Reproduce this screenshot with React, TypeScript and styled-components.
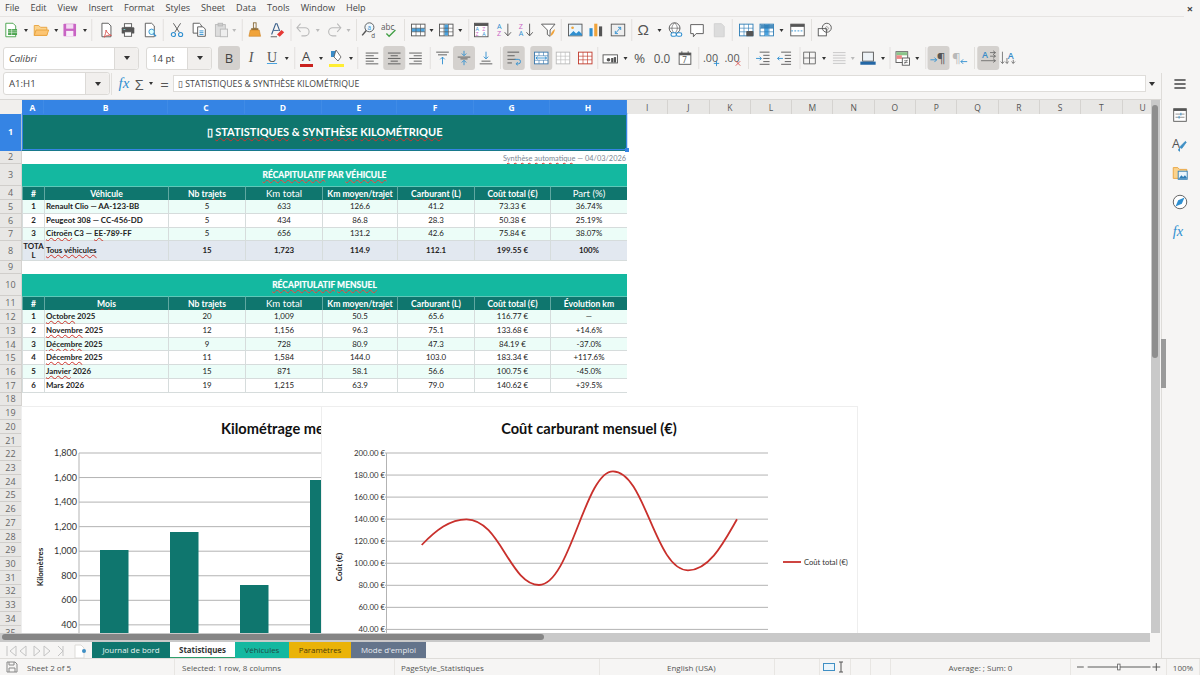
// App.tsx - spreadsheet window (Statistiques sheet)
import React from 'react';
import styled, { createGlobalStyle } from 'styled-components';

const GlobalStyle = createGlobalStyle`
  html, body { margin: 0; padding: 0; background: #f6f5f4; }
  body { font-family: "Open Sans", "Noto Sans", sans-serif; overflow: hidden; }
`;

/* ---------- window frame ---------- */
const Window = styled.div`
  width: 1200px;
  height: 675px;
  display: flex;
  flex-direction: column;
  overflow: hidden;
  background: #f6f5f4;
  color: #3a3a3a;
`;

const MenuBar = styled.div`
  height: 17px;
  flex: none;
  box-sizing: border-box;
  display: flex;
  align-items: center;
  padding: 0 11px 1px 5px;
  gap: 11px;
  font-size: 9.1px;
  color: #444;
  border-bottom: 1px solid #e6e4e2;
  margin-right: 16px;
`;

const CloseMark = styled.span`
  position: absolute;
  right: 7px;
  top: 1px;
  font-size: 11px;
  font-weight: 700;
  color: #444;
`;

const Toolbar = styled.div<{ $h: number }>`
  height: ${p => p.$h}px;
  flex: none;
  display: flex;
  align-items: center;
`;

const Slot = styled.div<{ $w: number }>`
  width: ${p => p.$w}px;
  flex: none;
  height: 24px;
  display: flex;
  align-items: center;
  justify-content: center;
  position: relative;
`;

const ActiveBox = styled.div`
  flex: none;
  width: 22px;
  height: 24px;
  border-radius: 3px;
  background: #d4d1ce;
  display: flex;
  align-items: center;
  justify-content: center;
`;

const Sep = styled.div`
  width: 1px;
  height: 22px;
  background: #e2e0dd;
`;

const Arrow = styled.div<{ $off?: boolean }>`
  width: 0;
  height: 0;
  border-left: 2.5px solid transparent;
  border-right: 2.5px solid transparent;
  border-top: 3px solid ${p => (p.$off ? '#bbb' : '#333')};
`;

const Combo = styled.div<{ $w: number; $ml: number; $italic?: boolean; $btn: number }>`
  width: ${p => p.$w}px;
  height: 23px;
  margin-left: ${p => p.$ml}px;
  flex: none;
  box-sizing: border-box;
  background: #fff;
  border: 1px solid #dcdad7;
  border-radius: 3px;
  display: flex;
  align-items: center;
  font-size: 9.6px;
  font-style: ${p => (p.$italic ? 'italic' : 'normal')};
  color: #444;
  padding-left: 5px;

  & > span { flex: 1; }
  & > div {
    width: ${p => p.$btn}px;
    height: 100%;
    background: #f1efed;
    border-left: 1px solid #dcdad7;
    border-radius: 0 3px 3px 0;
    display: flex;
    align-items: center;
    justify-content: center;
  }
`;

const ComboArrow = styled(Arrow)`
  border-left-width: 3.5px;
  border-right-width: 3.5px;
  border-top-width: 4px;
`;

/* ---------- middle: formula bar, sheet, sidebar ---------- */
const Middle = styled.div`
  flex: 1;
  min-height: 0;
  display: flex;
`;

const LeftPane = styled.div`
  width: 1161px;
  flex: none;
  display: flex;
  flex-direction: column;
  border-right: 1px solid #dedcd9;
`;

const FormulaBar = styled.div`
  height: 27px;
  flex: none;
  display: flex;
  align-items: center;
  padding-bottom: 5px;
  border-bottom: 1px solid #d9d7d4;
  box-sizing: border-box;
`;

const FormulaInput = styled.div`
  width: 973px;
  height: 17px;
  flex: none;
  box-sizing: border-box;
  background: #fff;
  border: 1px solid #dfddda;
  margin-left: 2px;
  display: flex;
  align-items: center;
  padding-left: 4px;
  font-size: 8.7px;
  color: #444;
  white-space: nowrap;
`;

const FormulaGlyph = styled.span<{ $w: number; $c?: string; $size?: number; $serif?: boolean }>`
  width: ${p => p.$w}px;
  flex: none;
  text-align: center;
  color: ${p => p.$c || '#555'};
  font-size: ${p => p.$size || 13}px;
  font-family: ${p => (p.$serif ? '"Liberation Serif", serif' : 'inherit')};
  font-style: ${p => (p.$serif ? 'italic' : 'normal')};
`;

const SheetRow = styled.div`
  flex: 1;
  min-height: 0;
  display: flex;
`;

const SheetClip = styled.div`
  width: 1151px;
  flex: none;
  position: relative;
  overflow: hidden;
  background: #fff;
`;

const SheetGrid = styled.div`
  display: grid;
  grid-template-columns: 22px 22px 124px 77px 77px 75px 77px 76px 77px repeat(13, 41.3px);
  grid-template-rows: 14px 36.5px 13.5px 22px 14.2px 13.7px 13.7px 13.7px 19.5px 13.3px 22px 14.2px repeat(25, 13.73px);
  font-family: Lato, "Open Sans", sans-serif;
`;

const Corner = styled.div`
  background: #f1efed;
`;

const ColHead = styled.div<{ $on?: boolean }>`
  display: flex;
  align-items: center;
  justify-content: center;
  font-size: 8.5px;
  box-sizing: border-box;
  font-family: "Open Sans", sans-serif;
  font-weight: ${p => (p.$on ? 700 : 400)};
  color: ${p => (p.$on ? '#fff' : '#555')};
  background: ${p => (p.$on ? '#3584e4' : '#e8e7e5')};
  border-right: 1px solid ${p => (p.$on ? '#3f8be6' : '#d5d3d0')};
`;

const RowHead = styled.div<{ $on?: boolean }>`
  grid-column: 1;
  display: flex;
  align-items: center;
  justify-content: center;
  box-sizing: border-box;
  font-size: 9px;
  font-family: "Open Sans", sans-serif;
  font-weight: ${p => (p.$on ? 700 : 400)};
  color: ${p => (p.$on ? '#fff' : '#666')};
  background: ${p => (p.$on ? '#3584e4' : '#e8e7e5')};
  border-bottom: 1px solid ${p => (p.$on ? '#3584e4' : '#d0cecb')};
  border-right: 1px solid #d5d3d0;
`;

const TitleCell = styled.div`
  grid-column: 2 / span 8;
  background: #0f766e;
  color: #fff;
  font-size: 11px;
  font-weight: 700;
  display: flex;
  align-items: center;
  justify-content: center;
  padding-bottom: 2px;
  box-sizing: border-box;
  border-top: 1px solid #fff;
`;

const NoteCell = styled.div`
  grid-column: 2 / span 8;
  color: #7b8794;
  font-size: 7.4px;
  text-align: right;
  line-height: 15px;
  padding-right: 1px;
  background: #fff;
`;

const BandCell = styled.div`
  grid-column: 2 / span 8;
  background: #14b8a0;
  color: #fff;
  font-size: 8.5px;
  font-weight: 700;
  display: flex;
  align-items: center;
  justify-content: center;
  text-shadow: 0 0 1px rgba(255, 255, 255, 0.5);
`;

const HeadCell = styled.div<{ $size?: number }>`
  background: #0f766e;
  color: #fff;
  font-size: ${p => p.$size || 8.6}px;
  font-weight: ${p => (p.$size ? 400 : 700)};
  display: flex;
  align-items: center;
  justify-content: center;
  box-sizing: border-box;
  border-left: 1px solid #5fa8a1;
  border-top: 1px solid #5fc8b8;
  white-space: nowrap;
`;

const Cell = styled.div<{ $bg: string; $bold?: boolean; $left?: boolean }>`
  background: ${p => p.$bg};
  color: #222;
  font-size: 7.9px;
  font-weight: ${p => (p.$bold ? 700 : 400)};
  display: flex;
  align-items: center;
  justify-content: ${p => (p.$left ? 'flex-start' : 'center')};
  text-align: center;
  line-height: 9px;
  padding-left: ${p => (p.$left ? 1 : 0)}px;
  box-sizing: border-box;
  border-left: 1px solid #d6dcdc;
  border-bottom: 1px solid #d6dcdc;
  white-space: nowrap;
`;

const WrapCell = styled(Cell)`
  white-space: normal;
  word-break: break-all;
`;

const Sp = styled.span`
  text-decoration: underline wavy #d0342c;
  text-decoration-thickness: 0.7px;
  text-underline-offset: 1px;
  text-decoration-skip-ink: none;
`;

const RowFill = styled.div`
  grid-column: 2 / span 8;
  background: #fff;
`;

const Selection = styled.div`
  position: absolute;
  left: 22px;
  top: 14px;
  width: 605px;
  height: 36px;
  border: 1px solid #3584e4;
  box-sizing: border-box;
  outline: 1px solid rgba(53, 132, 228, 0.25);

  &::after {
    content: '';
    position: absolute;
    right: -3px;
    bottom: -3px;
    width: 4px;
    height: 4px;
    background: #3584e4;
  }
`;

const ChartFrame = styled.div<{ $x: number; $w: number }>`
  position: absolute;
  left: ${p => p.$x}px;
  top: 307px;
  width: ${p => p.$w}px;
  height: 240px;
  background: #fff;
  box-shadow: 0 0 0 1px #eeeeee;
`;

const VScroll = styled.div`
  width: 9px;
  flex: none;
  background: #c9c9c9;
  position: relative;
`;

const VThumb = styled.div`
  position: absolute;
  left: 1px;
  top: 5px;
  width: 6px;
  height: 253px;
  border-radius: 3px;
  background: #8e8e8e;
`;

const HScroll = styled.div`
  height: 9px;
  flex: none;
  width: 1150px;
  background: #c9c9c9;
  position: relative;
`;

const HThumb = styled.div`
  position: absolute;
  left: 2px;
  top: 1px;
  height: 6px;
  width: 542px;
  border-radius: 3px;
  background: #858585;
`;

const TabBar = styled.div`
  height: 16px;
  flex: none;
  display: flex;
  align-items: center;
`;

const TabNav = styled.div`
  width: 92px;
  flex: none;
  height: 16px;
`;

const Tab = styled.div<{ $bg: string; $fg: string; $w: number; $on?: boolean }>`
  width: ${p => p.$w}px;
  height: 16px;
  box-sizing: border-box;
  flex: none;
  background: ${p => p.$bg};
  color: ${p => p.$fg};
  font-size: 7.9px;
  font-weight: ${p => (p.$on ? 700 : 400)};
  display: flex;
  align-items: center;
  justify-content: center;
  border-bottom: ${p => (p.$on ? '1px solid #2e9e6b' : 'none')};
`;

const Sidebar = styled.div`
  flex: 1;
  display: flex;
  flex-direction: column;
  align-items: center;
  gap: 9px;
  padding: 1px 2px 0 0;
  position: relative;
`;

const SideItem = styled.div<{ $mb?: number }>`
  height: 20px;
  display: flex;
  align-items: center;
  justify-content: center;
  margin-bottom: ${p => p.$mb || 0}px;
`;

const SideHandle = styled.div`
  position: absolute;
  left: -1px;
  top: 266px;
  width: 5px;
  height: 49px;
  background: #9a9a9a;
`;

const StatusBar = styled.div`
  height: 17px;
  flex: none;
  display: flex;
  align-items: center;
  font-size: 8px;
  color: #555;
  border-top: 1px solid #dedcd9;
  box-sizing: border-box;
`;

const StatusCell = styled.div<{ $w: number; $center?: boolean; $pad?: number }>`
  width: ${p => p.$w}px;
  height: 100%;
  flex: none;
  box-sizing: border-box;
  display: flex;
  align-items: center;
  gap: 3px;
  justify-content: ${p => (p.$center ? 'center' : 'flex-start')};
  padding-left: ${p => p.$pad || 0}px;
  border-right: 1px solid #e8e6e3;
  white-space: nowrap;
`;

/* ---------- icons ---------- */
const B = '#2f8fd0';
const G = '#555';
const LG = '#b9b9b9';

const Lines = ({ ys, x1, x2, c = G }: { ys: number[]; x1: number[]; x2: number[]; c?: string }) => (
  <>
    {ys.map((y, i) => (
      <line key={y} x1={x1[i % x1.length]} x2={x2[i % x2.length]} y1={y} y2={y} stroke={c} />
    ))}
  </>
);

const TableGlyph = ({ fill, kind, stroke = G }: { fill: string; kind: 'row' | 'col' | 'none'; stroke?: string }) => (
  <>
    <rect x="2.5" y="3.5" width="15" height="13" fill="#fff" stroke={stroke} />
    {kind === 'row' && <rect x="3" y="8" width="14" height="4" fill={fill} />}
    {kind === 'col' && <rect x="8" y="4" width="4" height="12" fill={fill} />}
    <path d="M2.5 8h15M2.5 12h15M7.5 3.5v13M12.5 3.5v13" stroke={stroke} strokeWidth=".7" fill="none" />
  </>
);

const icons: Record<string, React.ReactNode> = {
  new: (<><path d="M4.5 2.5h8l3 3v12h-11z" fill="#fff" stroke="#43a047" /><rect x="7" y="9" width="10" height="6.5" fill="#43a047" /><path d="M7 11h10M7 13h10M11 9v6.5" stroke="#fff" strokeWidth=".6" /></>),
  open: (<><path d="M2.5 16V5h5l2 2h7v9z" fill="#fbd38d" stroke="#e8a33d" /><path d="M2.5 16l2-6h14l-2 6z" fill="#fcc573" stroke="#e8a33d" /></>),
  save: (<><rect x="3" y="3" width="14" height="14" rx="1" fill="#c964c4" /><rect x="6" y="3.5" width="8" height="5" fill="#f4dcf3" /><rect x="6" y="11" width="8" height="6" fill="#f9eef9" /></>),
  pdf: (<><path d="M5.5 2.5h7l3 3v12h-10z" fill="#fff" stroke={G} /><path d="M10 10c1 3 3 5 6 6-3-.5-6 0-8 2 1-3 2-5 2-8z" fill="none" stroke="#d9534f" /></>),
  print: (<><rect x="6" y="3" width="8" height="4" fill="#fff" stroke={G} /><rect x="3" y="7" width="14" height="7" rx="1" fill="#555" /><rect x="6" y="12" width="8" height="5" fill="#fff" stroke={G} /><rect x="5" y="9" width="2" height="1" fill="#7cc" /></>),
  preview: (<><path d="M4.5 2.5h7l3 3v12h-10z" fill="#fff" stroke={G} /><circle cx="11.5" cy="12" r="3" fill="#dff" stroke={B} /><path d="M13.5 14l3 3" stroke={B} strokeWidth="1.4" /></>),
  cut: (<><path d="M6 2.5l6.5 10M14 2.5L7.5 12.5" stroke={G} fill="none" /><circle cx="6" cy="15" r="2.3" fill="none" stroke={B} strokeWidth="1.2" /><circle cx="14" cy="15" r="2.3" fill="none" stroke={B} strokeWidth="1.2" /></>),
  copy: (<><path d="M3.5 2.5h7l2 2v9h-9z" fill="#fff" stroke={G} /><path d="M8.5 6.5h6l2.5 2.5v8h-8.5z" fill="#fff" stroke={G} /><path d="M10.5 11h4.5M10.5 13h4.5M10.5 15h4.5" stroke={B} /></>),
  paste: (<><rect x="3.5" y="4" width="11" height="13" fill="#ddd" stroke={LG} /><rect x="6.5" y="2.5" width="5" height="3" fill="#ccc" stroke={LG} /><rect x="9" y="9" width="8" height="8.5" fill="#eee" stroke={LG} /></>),
  clone: (<><rect x="8.5" y="2" width="3" height="6" fill="none" stroke="#8a6d3b" /><rect x="6" y="8" width="8" height="2" fill="#8a6d3b" /><path d="M5 10h10l1.5 7h-13z" fill="#f0a33a" stroke="#c77d1e" strokeWidth=".6" /></>),
  clear: (<><path d="M4 15L8.5 3h1.5l3 8" fill="none" stroke="#3a5f8a" strokeWidth="1.2" /><path d="M6 10.5h6" stroke="#3a5f8a" /><path d="M10 15l5-5 3 2.5-5 5z" fill="#e53935" /><path d="M3 17.5h7" stroke={G} /></>),
  undo: (<path d="M7 3L3 7.5 7 12M3.5 7.5H12a4.5 4.5 0 010 9H8" fill="none" stroke={LG} strokeWidth="1.2" />),
  redo: (<path d="M13 3l4 4.5L13 12M16.5 7.5H8a4.5 4.5 0 000 9h4" fill="none" stroke={LG} strokeWidth="1.2" />),
  find: (<><circle cx="11" cy="7" r="5" fill="#eef7fd" stroke={G} /><path d="M7.5 10.5L3 16" stroke={G} strokeWidth="1.6" /><text x="9" y="9.5" fontSize="7" fill={B} fontFamily="Open Sans">a</text><text x="13" y="18.5" fontSize="7" fill={G} fontFamily="Open Sans">d</text></>),
  spell: (<><text x="0" y="10" fontSize="9" fill={G} fontFamily="Open Sans">abc</text><path d="M6 14l3 3 7-7" fill="none" stroke="#43a047" strokeWidth="1.5" /></>),
  rows: <TableGlyph fill="#4aa3df" kind="row" />,
  cols: <TableGlyph fill="#4aa3df" kind="col" />,
  sort: (<><rect x="2.5" y="2.5" width="15" height="15" fill="#fff" stroke={G} /><rect x="2.5" y="2.5" width="15" height="3" fill={G} /><text x="3.5" y="11" fontSize="6" fill={B} fontFamily="Open Sans">A</text><text x="3.5" y="17" fontSize="6" fill="#c964c4" fontFamily="Open Sans">Z</text><text x="11" y="11" fontSize="6" fill="#c964c4" fontFamily="Open Sans">Z</text><text x="11" y="17" fontSize="6" fill={B} fontFamily="Open Sans">A</text></>),
  asc: (<><text x="2" y="9" fontSize="8" fill={B} fontFamily="Open Sans">A</text><text x="2" y="17" fontSize="8" fill="#c964c4" fontFamily="Open Sans">Z</text><path d="M14 3v13M10.5 12.5L14 16.5l3.5-4" fill="none" stroke={G} /></>),
  desc: (<><text x="2" y="9" fontSize="8" fill="#c964c4" fontFamily="Open Sans">Z</text><text x="2" y="17" fontSize="8" fill={B} fontFamily="Open Sans">A</text><path d="M14 3v13M10.5 12.5L14 16.5l3.5-4" fill="none" stroke={G} /></>),
  filter: (<><path d="M2.5 3.5h15L12 10v7l-3-2v-5z" fill="#fff" stroke={G} /><path d="M12.5 17c0-3 2-6 5-8-.5 3-1.5 6-5 8z" fill="#f0a33a" /></>),
  image: (<><rect x="2.5" y="3.5" width="15" height="13" fill="#eaf5fc" stroke={G} /><circle cx="7" cy="7.5" r="1.5" fill="#f0a33a" /><path d="M3 16l5-5 3 3 3-3 3.5 3.5V16z" fill={B} /></>),
  chart: (<><rect x="3" y="8" width="3.5" height="9" fill={B} /><rect x="8.3" y="3" width="3.5" height="14" fill="#f0a33a" /><rect x="13.6" y="6" width="3.5" height="11" fill={G} /></>),
  pivot: (<><rect x="2.5" y="3.5" width="15" height="13" fill="#eee" stroke={G} /><path d="M7 14l6-7M13 7h-3M13 7v3M7 14h3M7 14v-3" stroke={B} fill="none" /></>),
  omega: (<text x="2" y="16" fontSize="17" fill={G} fontFamily="Liberation Sans">Ω</text>),
  link: (<><circle cx="9" cy="8" r="6" fill="#fff" stroke={G} /><path d="M3 8h12M9 2c-4 4-4 8 0 12M9 2c4 4 4 8 0 12" fill="none" stroke={G} strokeWidth=".7" /><rect x="5" y="13" width="6" height="4" rx="2" fill="#fff" stroke={B} strokeWidth="1.2" /><rect x="11" y="13" width="6" height="4" rx="2" fill="#fff" stroke={B} strokeWidth="1.2" /></>),
  comment: (<path d="M3 4h14v10H9l-3 3.5V14H3z" fill="#fff" stroke={G} />),
  note: (<path d="M4.5 3h8l3 3v11.5h-11z" fill="#dcdcdc" stroke="#d0d0d0" />),
  headers: (<><TableGlyph fill="#4aa3df" kind="none" stroke="#2e7db5" /><rect x="10" y="11" width="8" height="6" rx="1" fill={G} /></>),
  freeze: (<><TableGlyph fill="#4aa3df" kind="col" stroke="#2e7db5" /><rect x="3" y="4" width="14" height="4" fill="#2e7db5" opacity=".85" /></>),
  split: (<><rect x="2.5" y="3.5" width="15" height="13" fill="#fff" stroke={G} /><rect x="2.5" y="3.5" width="15" height="3" fill={G} /><path d="M3 11h14" stroke={B} strokeDasharray="2 1.5" /></>),
  shapes: (<><rect x="2.5" y="8.5" width="9" height="8" fill="#fff" stroke={G} /><circle cx="12" cy="7.5" r="5" fill="none" stroke={G} /><path d="M10 8l2-2 2 2-2 3z" fill="none" stroke={G} strokeWidth=".6" /></>),
  alignL: <Lines ys={[4.5, 7.5, 10.5, 13.5, 16.5]} x1={[3]} x2={[17, 12, 17, 12, 17]} />,
  alignC: <Lines ys={[4.5, 7.5, 10.5, 13.5, 16.5]} x1={[3, 6]} x2={[17, 14]} />,
  alignR: <Lines ys={[4.5, 7.5, 10.5, 13.5, 16.5]} x1={[3, 8]} x2={[17]} />,
  top: (<><Lines ys={[3.5, 6.5]} x1={[3, 5]} x2={[17, 15]} /><path d="M10 17V9M7.5 11.5L10 9l2.5 2.5" fill="none" stroke={B} /></>),
  middle: (<><Lines ys={[9, 11]} x1={[3, 6]} x2={[17, 14]} /><path d="M10 2v5M7.5 5L10 7.5 12.5 5M10 18v-5M7.5 15L10 12.5l2.5 2.5" fill="none" stroke={B} /></>),
  bottom: (<><Lines ys={[13.5, 16.5]} x1={[5, 3]} x2={[15, 17]} /><path d="M10 3v8M7.5 8.5L10 11l2.5-2.5" fill="none" stroke={B} /></>),
  wrap: (<><Lines ys={[3.5, 7.5, 11.5, 15.5]} x1={[3]} x2={[16, 11, 12, 8]} /><path d="M11 11.5h4a2 2 0 010 5h-2M14.5 14.5L12.5 16.5l2 1.5" fill="none" stroke={B} /></>),
  merge: (<><rect x="2.5" y="3.5" width="15" height="13" fill="#fff" stroke="#3a78ad" /><path d="M2.5 7.5h15M2.5 12.5h15M7.5 3.5v4M12.5 3.5v4M7.5 12.5v4M12.5 12.5v4" stroke="#3a78ad" strokeWidth=".7" /><path d="M4 10h12M6 8.5L4 10l2 1.5M14 8.5l2 1.5-2 1.5" stroke={B} fill="none" /></>),
  unmerge: <TableGlyph fill="#ccc" kind="none" stroke={LG} />,
  splitcell: <TableGlyph fill="#ccc" kind="none" stroke="#c0392b" />,
  currency: (<><rect x="2" y="6.5" width="16" height="9" fill="#fff" stroke={G} /><circle cx="8" cy="12" r="2" fill={G} /><rect x="11" y="10" width="2.5" height="5" fill={G} /><rect x="14" y="9" width="2.5" height="6" fill={G} /></>),
  percent: (<text x="1" y="16" fontSize="15" fill={G} fontFamily="Open Sans">%</text>),
  number: (<text x="0" y="15" fontSize="13" fill={G} fontFamily="Open Sans">0.0</text>),
  date: (<><rect x="3.5" y="4.5" width="13" height="12.5" fill="#fff" stroke={G} /><rect x="3.5" y="4.5" width="13" height="2.5" fill={G} /><path d="M6.5 2.5v3M13.5 2.5v3" stroke={G} /><text x="7" y="15.5" fontSize="9" fill={G} fontFamily="Open Sans">7</text></>),
  decAdd: (<><text x="0" y="14" fontSize="12" fill={G} fontFamily="Open Sans">.00</text><path d="M15 13v6M12 16h6" stroke={B} /></>),
  decDel: (<><text x="0" y="14" fontSize="12" fill={G} fontFamily="Open Sans">.00</text><path d="M12.5 13.5l5 5M17.5 13.5l-5 5" stroke="#d9534f" /></>),
  indent: (<><Lines ys={[3.5, 7, 10.5, 14, 17]} x1={[6, 10, 10, 10, 6]} x2={[17]} /><path d="M2 10.5h6M6 8.5l2 2-2 2" fill="none" stroke={B} /></>),
  outdent: (<><Lines ys={[3.5, 7, 10.5, 14, 17]} x1={[6, 10, 10, 10, 6]} x2={[17]} /><path d="M8 10.5H2M4 8.5l-2 2 2 2" fill="none" stroke={B} /></>),
  border: (<path d="M3.5 3.5h13v13h-13zM3.5 10h13M10 3.5v13" fill="none" stroke="#666" />),
  lineStyle: <Lines ys={[4, 7, 10, 13, 16]} x1={[3]} x2={[17]} c="#c4c4c4" />,
  borderColor: (<><rect x="4" y="3.5" width="12" height="10" fill="#eef3f7" stroke={G} /><rect x="1.5" y="14" width="17" height="3.5" fill="#2467a5" /></>),
  cond: (<><rect x="2.5" y="3" width="13" height="12" fill="#fff" stroke={G} /><rect x="3" y="3.5" width="12" height="3.5" fill="#8bc48a" /><rect x="3" y="7" width="6" height="4" fill="#e88" /><rect x="9.5" y="10" width="8" height="8" fill="#fff" stroke={G} /><path d="M11.5 13h4M11.5 15h4M15 12l-3 4.5" stroke={G} strokeWidth=".7" /></>),
  ltr: (<><text x="8" y="15" fontSize="15" fill={G} fontFamily="Open Sans">¶</text><path d="M1 12h7M5.5 9.5L8 12l-2.5 2.5" fill="none" stroke={B} /></>),
  rtl: (<><text x="1" y="15" fontSize="15" fill={LG} fontFamily="Open Sans">¶</text><path d="M18 14h-7M13.5 11.5L11 14l2.5 2.5" fill="none" stroke={B} /></>),
  textH: (<><text x="3" y="10" fontSize="10" fill="#3a8cc8" fontWeight="600" fontFamily="Open Sans">A</text><path d="M12 4h6M12 8h6M2 13h16M15.5 2l2.5 2-2.5 2M15.5 6l2.5 2-2.5 2M15.5 11l2.5 2-2.5 2" fill="none" stroke={G} strokeWidth=".8" /></>),
  textV: (<><text x="9" y="11" fontSize="10" fill="#3a8cc8" fontWeight="600" fontFamily="Open Sans">A</text><path d="M3 3v13M8 10v6M15 12v4M1 14l2 2 2-2M6 14l2 2 2-2M13 14l2 2 2-2" fill="none" stroke={G} strokeWidth=".8" /></>),
  hamburger: (<path d="M3 5h14M3 10h14M3 15h14" stroke="#444" strokeWidth="1.6" />),
  props: (<><rect x="3" y="3" width="14" height="14" fill="#fff" stroke={G} /><rect x="3" y="3" width="14" height="2.5" fill={G} /><path d="M5 9h10M5 12.5h10" stroke={G} strokeWidth=".7" /><path d="M11 7.5v3M9 11v3" stroke={B} /></>),
  styleA: (<><text x="1" y="14" fontSize="14" fill={G} fontFamily="Open Sans">A</text><path d="M10 18c-2 0-2-2-1-3s2-1 3 0l5-7-1-1-6 6" fill="#3f8fc4" stroke="#3f8fc4" strokeWidth=".8" /></>),
  gallery: (<><path d="M2.5 16V4h5l2 2h8v10z" fill="#fbd38d" stroke="#e8a33d" /><rect x="8" y="8" width="10" height="9" fill="#eaf5fc" stroke="#2e7db5" /><path d="M8.5 16.5l3-4 2 2 2-2 2 2.5v1.5z" fill="#2e7db5" /></>),
  navigator: (<><circle cx="10" cy="10" r="7.5" fill="#fff" stroke={G} /><path d="M15 5l-3 7-7 3 3-7z" fill="#2f8fd0" /></>),
  functions: (<text x="2" y="16" fontSize="16" fontStyle="italic" fill="#2f8fd0" fontFamily="Liberation Serif">fx</text>),
};

const Ico = ({ name, size = 20 }: { name: string; size?: number }) => (
  <svg width={size} height={size} viewBox="0 0 20 20" style={{ flex: 'none' }}>{icons[name]}</svg>
);

type ToolItem = [string, number];

const FmtLetter = styled.span<{ $kind: string }>`
  font-family: "Liberation Serif", serif;
  font-size: 14px;
  color: #555;
  font-style: ${p => (p.$kind === 'italic' ? 'italic' : 'normal')};
  text-decoration: ${p => (p.$kind === 'under' ? 'underline #4aa3df' : 'none')};
`;

const BoldBox = styled(ActiveBox)`
  font-family: "Open Sans", sans-serif;
  font-size: 13px;
  color: #444;
`;

const ColorA = styled.div<{ $bar: string }>`
  width: 18px;
  height: 18px;
  display: flex;
  justify-content: center;
  font-size: 13px;
  line-height: 14px;
  color: #444;
  border-bottom: 3px solid ${p => p.$bar};
  box-sizing: border-box;
`;

const TextTool = ({ name }: { name: string }) => {
  if (name === 'B') return <BoldBox>B</BoldBox>;
  if (name === 'I') return <FmtLetter $kind="italic">I</FmtLetter>;
  if (name === 'U') return <FmtLetter $kind="under">U</FmtLetter>;
  if (name === 'fontColor') return <ColorA $bar="#c9211e">A</ColorA>;
  if (name === 'hl') return <ColorA $bar="#ffee33"><svg width="14" height="14" viewBox="0 0 14 14"><path d="M2 2h5v6H2z" fill="#3a8cc8" /><path d="M7 1l5 7-3 4-4-4z" fill="#fff" stroke="#555" strokeWidth=".8" /></svg></ColorA>;
  return null;
};

const ToolSlots = ({ items, start, active = [] }: { items: ToolItem[]; start: number; active?: string[] }) => {
  let left = start;
  return (
    <>
      {items.map(([name, c], i) => {
        const next = items[i + 1];
        const right = next ? (c + next[1]) / 2 : c + 11;
        const w = right - left;
        // keep the item centred on c even when the slot edges are uneven
        const shift = c - (left + right) / 2;
        left = right;
        let inner: React.ReactNode;
        if (name === 'sep') inner = <Sep />;
        else if (name === 'arr') inner = <Arrow />;
        else if (name === 'arrOff') inner = <Arrow $off />;
        else if (active.includes(name)) inner = <ActiveBox><Ico name={name} size={18} /></ActiveBox>;
        else if (name in icons) inner = <Ico name={name} size={18} />;
        else inner = <TextTool name={name} />;
        return <Slot key={`${name}${c}`} $w={w} style={{ transform: `translateX(${shift}px)` }}>{inner}</Slot>;
      })}
    </>
  );
};

const row1: ToolItem[] = [
  ['new', 12], ['arr', 27], ['open', 42], ['arr', 57], ['save', 71], ['arr', 86], ['sep', 93],
  ['pdf', 107], ['print', 129], ['preview', 151], ['sep', 164], ['cut', 178], ['copy', 200], ['paste', 222], ['arrOff', 235], ['sep', 243],
  ['clone', 256], ['clear', 278], ['sep', 292], ['undo', 304], ['arrOff', 319], ['redo', 335], ['arrOff', 349], ['sep', 357],
  ['find', 369], ['spell', 391], ['sep', 405], ['rows', 419], ['arr', 432], ['cols', 447], ['arr', 461], ['sep', 470],
  ['sort', 482], ['asc', 505], ['desc', 527], ['filter', 549], ['sep', 562], ['image', 576], ['chart', 597], ['pivot', 619], ['sep', 633],
  ['omega', 646], ['arr', 660], ['link', 676], ['comment', 698], ['note', 720], ['sep', 733], ['headers', 747], ['freeze', 768], ['arr', 782],
  ['split', 798], ['sep', 812], ['shapes', 826],
];

const row2: ToolItem[] = [
  ['B', 229], ['I', 251], ['U', 272], ['arr', 287], ['sep', 295], ['fontColor', 306], ['arr', 321], ['hl', 336], ['arr', 351], ['sep', 358],
  ['alignL', 372], ['alignC', 394], ['alignR', 415], ['sep', 430], ['top', 442], ['middle', 464], ['bottom', 486], ['sep', 500],
  ['wrap', 514], ['merge', 541], ['unmerge', 563], ['splitcell', 585], ['sep', 598], ['currency', 610], ['arr', 625], ['percent', 642],
  ['number', 663], ['date', 685], ['sep', 699], ['decAdd', 712], ['decDel', 733], ['sep', 748], ['indent', 763], ['outdent', 785], ['sep', 800],
  ['border', 809], ['arr', 824], ['lineStyle', 839], ['arrOff', 853], ['borderColor', 868], ['arr', 883], ['sep', 890],
  ['cond', 903], ['arr', 917], ['sep', 926], ['ltr', 938], ['rtl', 960], ['sep', 974], ['textH', 988], ['textV', 1009],
];

/* ---------- sheet data ---------- */
const colNames = 'ABCDEFGHIJKLMNOPQRSTU'.split('');
const mint = '#ecfdf8';
const white = '#ffffff';
const totalBg = '#e2e8f0';

const vehicles = [
  ['1', 'Renault Clio — AA-123-BB', '5', '633', '126.6', '41.2', '73.33 €', '36.74%'],
  ['2', 'Peugeot 308 — CC-456-DD', '5', '434', '86.8', '28.3', '50.38 €', '25.19%'],
  ['3', <><Sp>Citroën</Sp> C3 — <Sp>EE</Sp>-789-FF</>, '5', '656', '131.2', '42.6', '75.84 €', '38.07%'],
];

const months = [
  ['1', <><Sp>Octobre</Sp> 2025</>, '20', '1,009', '50.5', '65.6', '116.77 €', '—'],
  ['2', <><Sp>Novembre</Sp> 2025</>, '12', '1,156', '96.3', '75.1', '133.68 €', '+14.6%'],
  ['3', <><Sp>Décembre</Sp> 2025</>, '9', '728', '80.9', '47.3', '84.19 €', '-37.0%'],
  ['4', <><Sp>Décembre</Sp> 2025</>, '11', '1,584', '144.0', '103.0', '183.34 €', '+117.6%'],
  ['5', <><Sp>Janvier</Sp> 2026</>, '15', '871', '58.1', '56.6', '100.75 €', '-45.0%'],
  ['6', 'Mars 2026', '19', '1,215', '63.9', '79.0', '140.62 €', '+39.5%'],
];

const DataRow = ({ row, bg }: { row: React.ReactNode[]; bg: string }) => (
  <>
    {row.map((v, i) => (
      <Cell key={i} $bg={bg} $bold={i < 2} $left={i === 1}><span>{v}</span></Cell>
    ))}
  </>
);

const HeaderRow = ({ label, last }: { label: string; last: React.ReactNode }) => (
  <>
    <HeadCell>#</HeadCell>
    <HeadCell><Sp>{label}</Sp></HeadCell>
    <HeadCell><span>Nb <Sp>trajets</Sp></span></HeadCell>
    <HeadCell $size={9.6}>Km total</HeadCell>
    <HeadCell><span>Km <Sp>moyen/trajet</Sp></span></HeadCell>
    <HeadCell><span><Sp>Carburant</Sp> (L)</span></HeadCell>
    <HeadCell><span><Sp>Coût</Sp> total (€)</span></HeadCell>
    {last}
  </>
);

/* ---------- charts: coordinates are those of the page minus the frame origin ---------- */
const chartFont = 'Lato, sans-serif';

const KmChart = () => {
  const ticks = [1800, 1600, 1400, 1200, 1000, 800, 600, 400];
  const bars: [number, number][] = [[100, 550], [170, 532], [240, 585], [310, 480]];
  return (
    <svg width="300" height="240" viewBox="22 407 300 240" fontFamily={chartFont}>
      <text x="221" y="434" fontSize="14.6" fontWeight="700" fill="#111">Kilométrage mensuel</text>
      <line x1="79" x2="79" y1="453" y2="640" stroke="#b3b3b3" />
      {ticks.map((t, i) => {
        const y = 453 + i * 24.55;
        return (
          <g key={t}>
            <line x1="79" x2="322" y1={y} y2={y} stroke="#b3b3b3" />
            <text x="77" y={y + 3} fontSize="9" textAnchor="end" fill="#333">{t.toLocaleString('en-US')}</text>
          </g>
        );
      })}
      {bars.map(([x, top]) => (
        <rect key={x} x={x} y={top} width="28.5" height={645 - top} fill="#0f766e" />
      ))}
      <text transform="translate(43 567) rotate(-90)" fontSize="8" fontWeight="700" textAnchor="middle" fill="#222">Kilomètres</text>
    </svg>
  );
};

const CostChart = () => {
  const ticks = [200, 180, 160, 140, 120, 100, 80, 60, 40];
  return (
    <svg width="535" height="240" viewBox="322 407 535 240" fontFamily={chartFont}>
      <text x="589" y="434" fontSize="14.6" fontWeight="700" fill="#111" textAnchor="middle">Coût carburant mensuel (€)</text>
      <line x1="386.5" x2="386.5" y1="453" y2="640" stroke="#b3b3b3" />
      {ticks.map((t, i) => {
        const y = 453 + i * 22.05;
        return (
          <g key={t}>
            <line x1="385" x2="768" y1={y} y2={y} stroke="#b3b3b3" />
            <text x="385" y={y + 3} fontSize="7.8" textAnchor="end" fill="#333">{t}.00 €</text>
          </g>
        );
      })}
      <path
        d="M421.7 545C436 530 450 519.3 466.5 519.3C500 519.3 510 585 539 585C570 585 585 471.3 613 471.3C645 471.3 655 570.3 688 570.3C710 570.3 725 540 737 519.3"
        fill="none" stroke="#c9302c" strokeWidth="1.8"
      />
      <text transform="translate(342 567) rotate(-90)" fontSize="8" fontWeight="700" textAnchor="middle" fill="#222">Coût (€)</text>
      <line x1="783" x2="801" y1="562" y2="562" stroke="#c9302c" strokeWidth="1.8" />
      <text x="804" y="565" fontSize="7.6" fill="#333">Coût total (€)</text>
    </svg>
  );
};

const Sheet = () => (
  <SheetGrid>
    <Corner />
    {colNames.map((c, i) => <ColHead key={c} $on={i < 8}>{c}</ColHead>)}

    <RowHead $on>1</RowHead>
    <TitleCell><span>▯ <Sp>STATISTIQUES</Sp> &amp; <Sp>SYNTHÈSE</Sp> <Sp>KILOMÉTRIQUE</Sp></span></TitleCell>
    <div style={{ gridColumn: '10 / span 13' }} />

    <RowHead>2</RowHead>
    <NoteCell><Sp>Synthèse automatique</Sp> — 04/03/2026</NoteCell>

    <RowHead>3</RowHead>
    <BandCell><span><Sp>RÉCAPITULATIF</Sp> PAR <Sp>VÉHICULE</Sp></span></BandCell>

    <RowHead>4</RowHead>
    <HeaderRow label="Véhicule" last={<HeadCell $size={9.6}>Part (%)</HeadCell>} />

    {vehicles.map((r, i) => (
      <React.Fragment key={i}>
        <RowHead>{i + 5}</RowHead>
        <DataRow row={r} bg={i % 2 ? white : mint} />
      </React.Fragment>
    ))}

    <RowHead>8</RowHead>
    <WrapCell $bg={totalBg} $bold>TOTAL</WrapCell>
    <Cell $bg={totalBg} $bold $left><Sp>Tous véhicules</Sp></Cell>
    {['15', '1,723', '114.9', '112.1', '199.55 €', '100%'].map(v => (
      <Cell key={v} $bg={totalBg} $bold>{v}</Cell>
    ))}

    <RowHead>9</RowHead>
    <RowFill />

    <RowHead>10</RowHead>
    <BandCell><span><Sp>RÉCAPITULATIF</Sp> <Sp>MENSUEL</Sp></span></BandCell>

    <RowHead>11</RowHead>
    <HeaderRow label="Mois" last={<HeadCell><span><Sp>Évolution</Sp> km</span></HeadCell>} />

    {months.map((r, i) => (
      <React.Fragment key={i}>
        <RowHead>{i + 12}</RowHead>
        <DataRow row={r} bg={i % 2 ? white : mint} />
      </React.Fragment>
    ))}

    {Array.from({ length: 18 }, (_, i) => <RowHead key={i}>{i + 18}</RowHead>)}
  </SheetGrid>
);

const App: React.FC = () => (
  <Window>
    <GlobalStyle />
    <MenuBar>
      {['File', 'Edit', 'View', 'Insert', 'Format', 'Styles', 'Sheet', 'Data', 'Tools', 'Window', 'Help'].map(m => (
        <span key={m}>{m}</span>
      ))}
      <CloseMark>×</CloseMark>
    </MenuBar>

    <Toolbar $h={26}>
      <ToolSlots items={row1} start={1} />
    </Toolbar>

    <Toolbar $h={30}>
      <Combo $w={136} $ml={3} $btn={23} $italic><span>Calibri</span><div><ComboArrow /></div></Combo>
      <Combo $w={66} $ml={7} $btn={23}><span>14 pt</span><div><ComboArrow /></div></Combo>
      <ToolSlots items={row2} start={212} active={['alignC', 'middle', 'wrap', 'merge', 'ltr', 'textH']} />
    </Toolbar>

    <Middle>
      <LeftPane>
        <FormulaBar>
          <Combo $w={107} $ml={3} $btn={23}><span>A1:H1</span><div><ComboArrow /></div></Combo>
          <Slot $w={3}><Sep /></Slot>
          <FormulaGlyph $w={22} $c="#2f8fd0" $serif $size={15}>fx</FormulaGlyph>
          <FormulaGlyph $w={8} $size={15}>Σ</FormulaGlyph>
          <Slot $w={15}><Arrow /></Slot>
          <FormulaGlyph $w={13} $size={15}>=</FormulaGlyph>
          <FormulaInput>▯ STATISTIQUES &amp; SYNTHÈSE KILOMÉTRIQUE</FormulaInput>
          <Slot $w={12}><ComboArrow /></Slot>
        </FormulaBar>

        <SheetRow>
          <SheetClip>
            <Sheet />
            <Selection />
            <ChartFrame $x={22} $w={300}><KmChart /></ChartFrame>
            <ChartFrame $x={322} $w={535}><CostChart /></ChartFrame>
          </SheetClip>
          <VScroll><VThumb /></VScroll>
        </SheetRow>

        <HScroll><HThumb /></HScroll>

        <TabBar>
          <TabNav>
            <svg width="92" height="16" viewBox="0 0 92 16">
              <path d="M7 3v10M16 3l-6 5 6 5zM26 3l-6 5 6 5zM34 3l6 5-6 5zM44 3l6 5-6 5zM58 3l5 5-5 5M63 3v10" fill="none" stroke="#c4c4c4" />
              <path d="M75 2h6l3 3v10H75z" fill="#fff" stroke="#dddbd8" />
              <circle cx="84" cy="8" r="2" fill="#3f8fc4" />
            </svg>
          </TabNav>
          <Tab $w={78} $bg="#0f766e" $fg="#e6f3f1">Journal de bord</Tab>
          <Tab $w={65} $bg="#ffffff" $fg="#333" $on>Statistiques</Tab>
          <Tab $w={54} $bg="#14b8a0" $fg="#204a44">Véhicules</Tab>
          <Tab $w={62} $bg="#eab308" $fg="#4a3a08">Paramètres</Tab>
          <Tab $w={75} $bg="#64748b" $fg="#e8ecf1">Mode d'emploi</Tab>
        </TabBar>
      </LeftPane>

      <Sidebar>
        <SideHandle />
        <SideItem $mb={2}><Ico name="hamburger" size={16} /></SideItem>
        <SideItem><Ico name="props" size={18} /></SideItem>
        <SideItem><Ico name="styleA" size={18} /></SideItem>
        <SideItem><Ico name="gallery" size={18} /></SideItem>
        <SideItem><Ico name="navigator" size={18} /></SideItem>
        <SideItem><Ico name="functions" size={18} /></SideItem>
      </Sidebar>
    </Middle>

    <StatusBar>
      <StatusCell $w={175} $pad={6}>
        <svg width="12" height="12" viewBox="0 0 12 12" style={{ marginRight: 6 }}>
          <path d="M1 1h8l2 2v8H1z M3 1v3h5V1 M3 11V7h6v4" fill="none" stroke="#888" />
        </svg>
        Sheet 2 of 5
      </StatusCell>
      <StatusCell $w={220} $pad={7}>Selected: 1 row, 8 columns</StatusCell>
      <StatusCell $w={205} $pad={6}>PageStyle_Statistiques</StatusCell>
      <StatusCell $w={175} $pad={67}>English (USA)</StatusCell>
      <StatusCell $w={45} $pad={0}>&nbsp;</StatusCell>
      <StatusCell $w={31} $center>
        <svg width="26" height="12" viewBox="0 0 26 12">
          <rect x="1.5" y="2.5" width="11" height="7" fill="#eaf5fc" stroke="#3f8fc4" />
          <path d="M17 1h4M17 11h4M19 1v10" stroke="#555" />
        </svg>
      </StatusCell>
      <StatusCell $w={20}>&nbsp;</StatusCell>
      <StatusCell $w={20}>&nbsp;</StatusCell>
      <StatusCell $w={180} $center>Average: ; Sum: 0</StatusCell>
      <StatusCell $w={96} $pad={6}>
        <svg width="92" height="12" viewBox="0 0 92 12">
          <path d="M0 6h7M11 6h65M78 6h8M82 2v8" stroke="#555" />
          <rect x="42" y="3" width="2.5" height="6" fill="#fff" stroke="#555" strokeWidth=".8" />
        </svg>
      </StatusCell>
      <StatusCell $w={33} $center>100%</StatusCell>
    </StatusBar>
  </Window>
);

export default App;
